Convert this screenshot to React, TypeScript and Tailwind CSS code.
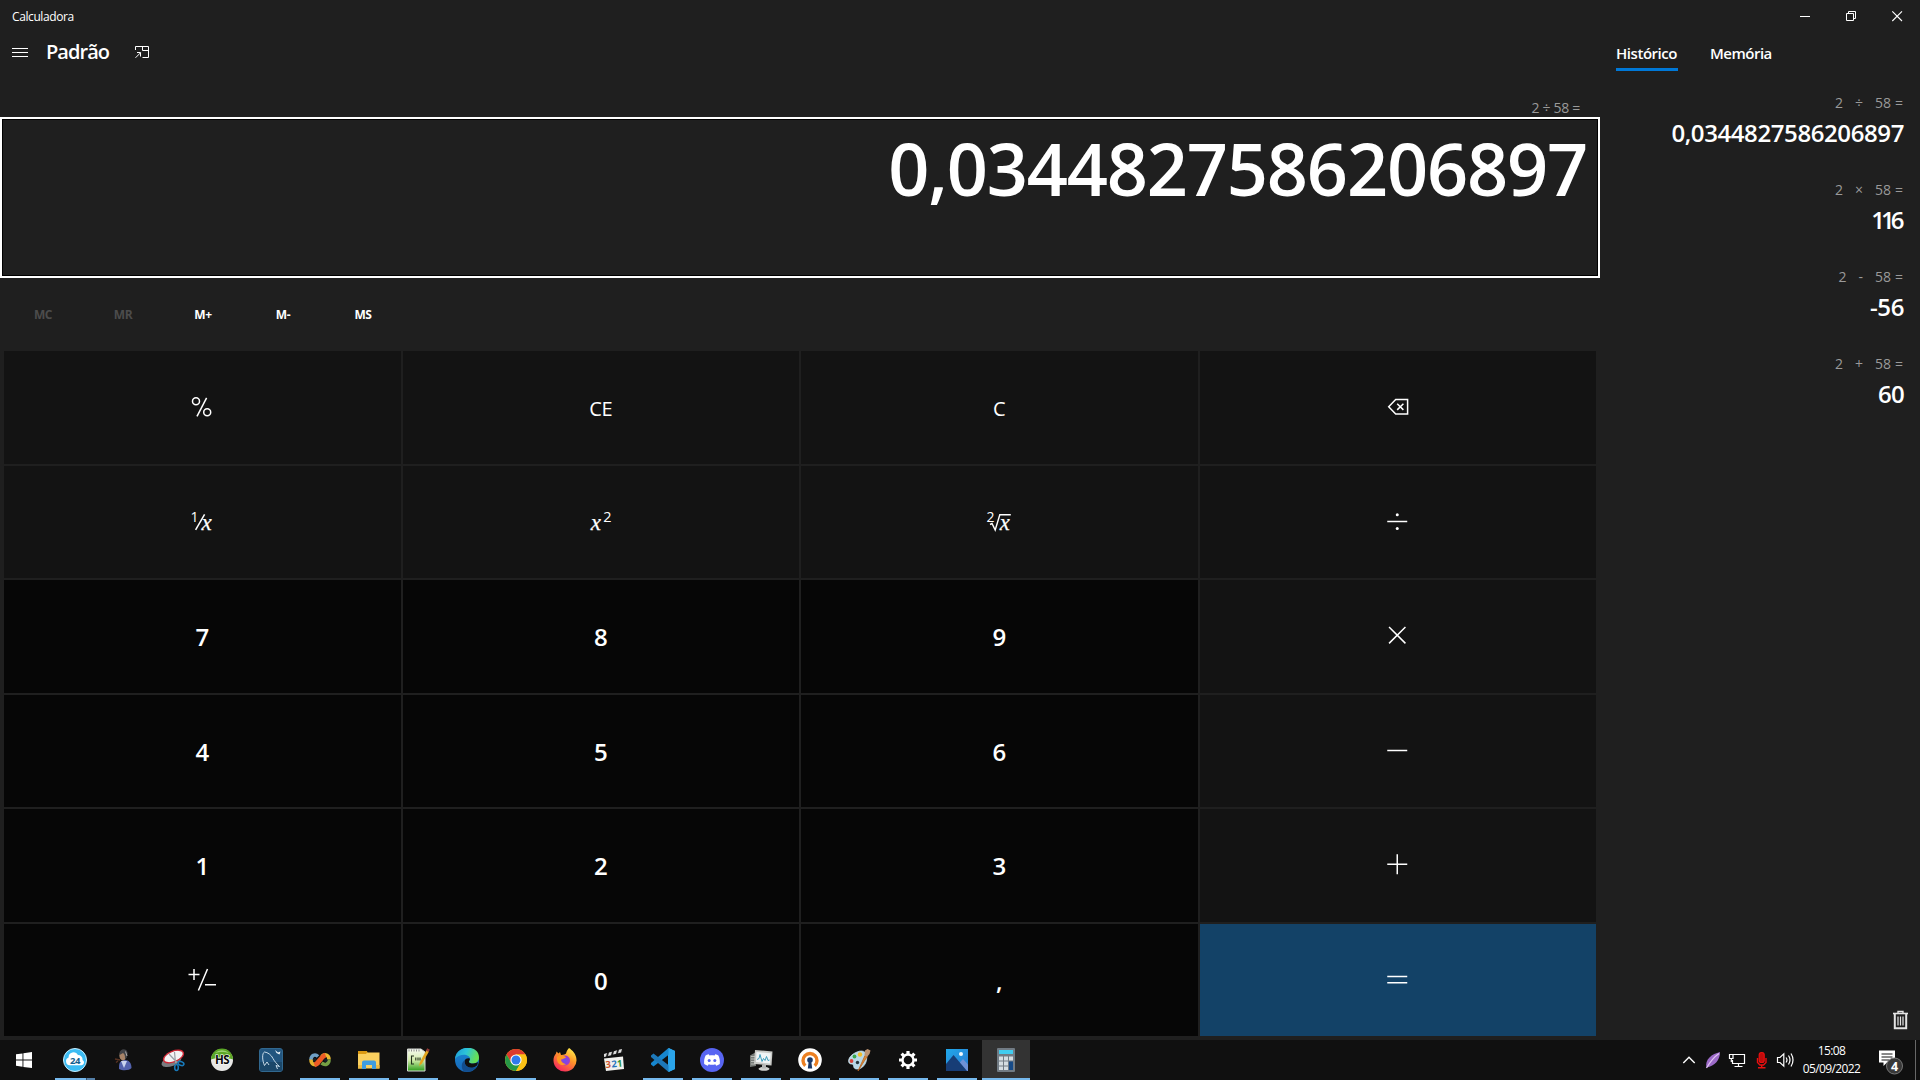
import type { ReactNode } from "react";

/* ---------- keypad glyphs ---------- */

function Glyph({ children, w = 32 }: { children: ReactNode; w?: number }) {
  return (
    <svg width={w} height="32" viewBox={`0 0 ${w} 32`} fill="none" stroke="#fff" strokeWidth="1.5">
      {children}
    </svg>
  );
}

const Percent = () => (
  <Glyph>
    <circle cx="10" cy="10.3" r="3.5" />
    <circle cx="21.2" cy="21.3" r="3.5" />
    <path d="M20.6 6.8 11 25.4" />
  </Glyph>
);

const Reciprocal = () => (
  <Glyph>
    <text x="4.5" y="16.2" fontSize="14" fill="#fff" stroke="none" fontFamily="Open Sans, sans-serif">1</text>
    <path d="M18.6 8.3 9.6 23.8" />
    <text x="15.6" y="23.5" fontSize="23" fill="#fff" stroke="#fff" strokeWidth=".25" fontStyle="italic" fontFamily="Liberation Serif, serif">x</text>
  </Glyph>
);

const Square = () => (
  <Glyph>
    <text x="5.8" y="23.700" fontSize="23" fill="#fff" stroke="#fff" strokeWidth=".25" fontStyle="italic" fontFamily="Liberation Serif, serif">x</text>
    <text x="18.3" y="16" fontSize="14.5" fill="#fff" stroke="none" fontFamily="Open Sans, sans-serif">2</text>
  </Glyph>
);

const Root = () => (
  <Glyph>
    <text x="3.600" y="16" fontSize="14" fill="#fff" stroke="none" fontFamily="Open Sans, sans-serif">2</text>
    <path d="M7 18.500 9 17.500 12.200 24 16.800 8.800H27.800" strokeWidth="1.400" />
    <text x="16.800" y="23.500" fontSize="22.500" fill="#fff" stroke="#fff" strokeWidth=".25" fontStyle="italic" fontFamily="Liberation Serif, serif">x</text>
  </Glyph>
);

const Backspace = () => (
  <Glyph>
    <path d="M6.700 15.800 13.700 8.600H25.600V23.100H13.700Z" strokeWidth="1.500" />
    <path d="M15.200 12.700 21.400 18.900M21.400 12.700 15.200 18.900" strokeWidth="1.500" />
  </Glyph>
);

const Divide = () => (
  <Glyph>
    <path d="M5.250 15.500H25.250" />
    <circle cx="15.250" cy="8.700" r="1.500" fill="#fff" stroke="none" />
    <circle cx="15.250" cy="22.400" r="1.500" fill="#fff" stroke="none" />
  </Glyph>
);

const Multiply = () => (
  <Glyph>
    <path d="M7.050 7 23.450 23.400M23.450 7 7.050 23.400" />
  </Glyph>
);

const Minus = () => (
  <Glyph>
    <path d="M5.250 15.500H25.250" />
  </Glyph>
);

const Plus = () => (
  <Glyph>
    <path d="M5.250 15.250H25.250M15.250 5.250V25.250" />
  </Glyph>
);

const Equals = () => (
  <Glyph>
    <path d="M5.250 12.500H25.250M5.250 18.700H25.250" />
  </Glyph>
);

const PlusMinus = () => (
  <Glyph>
    <path d="M2.500 10.500H13.500M8 5V16M21.500 5 12.400 26.500M19 20.700H30" />
  </Glyph>
);

/* ---------- keypad ---------- */

type Key = { id: string; content: ReactNode; tone: "op" | "num" | "eq" };

const digit = (d: string): Key => ({
  id: d,
  tone: "num",
  content: <span className="translate-y-px text-2xl font-semibold">{d}</span>,
});

const KEYS: Key[] = [
  { id: "percent", tone: "op", content: <Percent /> },
  { id: "CE", tone: "op", content: <span className="translate-y-0.5 text-[20px] tracking-[-0.3px]">CE</span> },
  { id: "C", tone: "op", content: <span className="translate-y-0.5 text-[20px]">C</span> },
  { id: "back", tone: "op", content: <Backspace /> },
  { id: "inv", tone: "op", content: <Reciprocal /> },
  { id: "sq", tone: "op", content: <Square /> },
  { id: "root", tone: "op", content: <Root /> },
  { id: "div", tone: "op", content: <Divide /> },
  digit("7"),
  digit("8"),
  digit("9"),
  { id: "mul", tone: "op", content: <Multiply /> },
  digit("4"),
  digit("5"),
  digit("6"),
  { id: "sub", tone: "op", content: <Minus /> },
  digit("1"),
  digit("2"),
  digit("3"),
  { id: "add", tone: "op", content: <Plus /> },
  { id: "neg", tone: "num", content: <PlusMinus /> },
  digit("0"),
  digit(","),
  { id: "eq", tone: "eq", content: <Equals /> },
];

const TONES = { op: "bg-[#131313]", num: "bg-[#060606]", eq: "bg-[#134267]" };

function Keypad() {
  return (
    <div className="grid h-[685px] grid-cols-4 grid-rows-6 gap-0.5 px-1">
      {KEYS.map((k) => (
        <button key={k.id} className={`flex items-center justify-center ${TONES[k.tone]}`}>
          {k.content}
        </button>
      ))}
    </div>
  );
}

/* ---------- history ---------- */

const HISTORY = [
  { op: "÷", result: "0,0344827586206897", spacing: "tracking-[-0.4px]" },
  { op: "×", result: "116", spacing: "mr-[3.6px] tracking-[-4px]" },
  { op: "-", result: "-56", spacing: "tracking-[-0.4px]" },
  { op: "+", result: "60", spacing: "tracking-[-0.7px]" },
];

function History() {
  return (
    <aside className="flex w-80 flex-col">
      <div className="flex h-[58px] gap-8 pl-4 text-[15px] font-semibold leading-5">
        <div className="flex h-[38px] w-[62px] flex-col justify-between">
          <span className="pt-[10px] tracking-[-0.45px]">Histórico</span>
          <span className="h-[3px] bg-[#0078d7]" />
        </div>
        <span className="pt-[10px] tracking-[-0.5px]">Memória</span>
      </div>
      <ul className="flex flex-1 flex-col pr-4 text-right">
        {HISTORY.map((h) => (
          <li key={h.op} className="flex h-[87px] flex-col pt-0.5">
            <div className="flex justify-end pr-px text-sm leading-5 text-[#9a9a9a]">
              <span>2</span>
              <span className="px-3">{h.op}</span>
              <span className="tracking-[0.1px]">58 =</span>
            </div>
            <span className={`pt-1 text-2xl font-semibold leading-8 ${h.spacing}`}>{h.result}</span>
          </li>
        ))}
      </ul>
      <div className="flex h-[39px] justify-end pr-3 pt-[9px]">
        <svg width="15" height="20" viewBox="0 0 15 20" fill="none" stroke="#e4e4e4">
          <path d="M0 3.5H15" strokeWidth="1.6" />
          <path d="M5 3V1.5H10V3" strokeWidth="1.4" />
          <path d="M1.8 4V18.2H13.2V4" strokeWidth="2" />
          <path d="M5 6.5V15.5M7.5 6.5V15.5M10 6.5V15.5" strokeWidth="1.2" />
        </svg>
      </div>
    </aside>
  );
}

/* ---------- taskbar icons ---------- */

function Ico({ children }: { children: ReactNode }) {
  return (
    <svg width="24" height="24" viewBox="0 0 24 24">
      {children}
    </svg>
  );
}

const Bitrix = () => (
  <Ico>
    <circle cx="12" cy="12" r="11.5" fill="#3cbcf3" stroke="#c9efff" />
    <path d="M6.500 17.300a4 4 0 0 1-.9-7.700A5 5 0 0 1 15 7a4.600 4.600 0 0 1 4.600 4.900 2.900 2.900 0 0 1-1.100 5.400Z" fill="#fff" />
    <text x="12" y="15.600" fontSize="9.500" fontWeight="700" textAnchor="middle" fill="#12608f" letterSpacing="-.4" fontFamily="Open Sans, sans-serif">24</text>
  </Ico>
);

const Agent = () => (
  <Ico>
    <path d="M7 19c0-5 2-7 6-7s6.500 3 6.500 8c-2 2.600-9 3-12.500 1Z" fill="#5362ad" />
    <path d="M9 13 12 20 15 13Z" fill="#c9d3ee" />
    <ellipse cx="11" cy="7.500" rx="3.600" ry="5" fill="#a88468" />
    <path d="M7.600 7C6 1 14.500-1 15.500 4.500c.5 3-1 6-2.500 7 0-3 .2-5-2-6.500Z" fill="#424347" />
    <path d="M13.500 3.500 15 8" stroke="#aaa" />
    <path d="M3 11 8 12M4 14.500l2-1.500" stroke="#593322" strokeWidth="1.500" />
  </Ico>
);

const Snip = () => (
  <Ico>
    <ellipse cx="10.500" cy="13" rx="10.500" ry="5" transform="rotate(-22 10.500 13)" fill="#797c80" />
    <ellipse cx="12.500" cy="8.500" rx="10.500" ry="5.300" transform="rotate(-22 12.500 8.500)" fill="#f3f3f4" stroke="#cf2634" strokeWidth="1.300" />
    <path d="m8 6 8 8.500M13.500 4l1 11" stroke="#9a9fa6" strokeWidth="1.200" />
    <g fill="none" stroke="#1878b8" strokeWidth="1.600">
      <ellipse cx="15.500" cy="19.500" rx="1.800" ry="3" />
      <ellipse cx="20" cy="15.500" rx="3" ry="1.900" transform="rotate(20 20 15.500)" />
    </g>
  </Ico>
);

const HeidiSql = () => (
  <Ico>
    <circle cx="12" cy="12" r="11" fill="#e8e8e6" />
    <path d="M1 11.500a11 11 0 0 1 22 0C17 9 7 9 1 11.500Z" fill="#5ba726" />
    <path d="M5 5a10 10 0 0 1 14 0c-4-1.500-10-1.500-14 0Z" fill="#9bd071" />
    <text x="12" y="16" fontSize="11.500" fontWeight="700" textAnchor="middle" fill="#080808" stroke="#fff" strokeWidth="1.200" paintOrder="stroke" fontFamily="Open Sans, sans-serif" letterSpacing="-.6">HS</text>
  </Ico>
);

const Workbench = () => (
  <Ico>
    <rect x=".5" y=".5" width="23" height="23" rx="2.500" fill="#22557f" stroke="#31688f" />
    <path d="M1 14h22v7.500a1.500 1.500 0 0 1-1.500 1.500h-19A1.500 1.500 0 0 1 1 21.500Z" fill="#1b4769" />
    <path d="M5.500 17.500C3 12 3 5 5.500 4c3 .2 7 3 8.500 6.500 1.500 3 4 5.500 6.500 8L17 17.500 18.500 21M5.500 17.500 8 14l2 3" fill="none" stroke="#c8dbe9" strokeWidth="1" />
    <path d="m16 2 3 2.500 2.500-1-1 3-3-1.500Z" fill="#edf5fa" />
  </Ico>
);

const Infinity8 = () => (
  <Ico>
    <g fill="none" strokeWidth="3.600">
      <path d="M10 8.500C7 5.500 3 7.500 3 12" stroke="#6f9fc5" />
      <path d="M3 11.500c0 5 4 6.500 7.500 3.500" stroke="#e2b32f" />
      <path d="M13.500 8.500c3.500-3 7.500-1.500 7.500 3" stroke="#eab931" />
      <path d="M21 11.500c0 4.500-3.500 6.500-7.500 3.500" stroke="#75a044" />
      <path d="M6.500 17C11 15.500 13 8.500 17.500 7" stroke="#ed5b25" strokeWidth="5" />
    </g>
    <circle cx="6.500" cy="11.800" r="1.800" fill="#17202a" />
    <circle cx="17.800" cy="12.200" r="1.800" fill="#17202a" />
  </Ico>
);

const Folder = () => (
  <Ico>
    <path d="M1 3h8.500l1 1.500H22.500V20.500H1Z" fill="#fbd05f" />
    <path d="M1 3h8.500l1 1-1.500 2H1Z" fill="#dc9a13" />
    <path d="M5 21v-6.500a2 2 0 0 1 2-2H17a2 2 0 0 1 2 2V21H15v-4H9v4Z" fill="#3f9de0" />
    <path d="M1 17h4v3.500H1ZM19 17h3.500v3.500H19Z" fill="#eebb45" />
  </Ico>
);

const Notepad = () => (
  <Ico>
    <defs>
      <linearGradient id="np" x1="0" y1="0" x2="0" y2="1">
        <stop offset="0" stopColor="#f8fbf1" />
        <stop offset=".5" stopColor="#d4edac" />
        <stop offset="1" stopColor="#2b9d19" />
      </linearGradient>
    </defs>
    <path d="M1.500 1H15l4 3v19H1.500Z" fill="url(#np)" stroke="#d7d9d5" />
    <path d="M3 1.500v2M5.500 1.500v2M8 1.500v2M10.500 1.500v2M13 1.500v2" stroke="#777" strokeWidth=".8" />
    <path d="M8 8H5.500v8H8M9.800 9.500v3M12 9.500v3M14 9.500v3" fill="none" stroke="#25331d" strokeWidth="1.100" />
    <path d="m13 18 1-4 6.500-12 2.500 1.500-7 12Z" fill="#e3a51d" />
    <path d="m20 2.500 1.200-2.300 2.600 1.500-1.300 2.300Z" fill="#943a36" />
  </Ico>
);

const Edge = () => (
  <Ico>
    <defs>
      <linearGradient id="eg" x1="0" y1="0" x2="1" y2=".3">
        <stop offset="0" stopColor="#1d98d5" />
        <stop offset=".5" stopColor="#2cc4da" />
        <stop offset="1" stopColor="#67df54" />
      </linearGradient>
      <linearGradient id="eb" x1="0" y1="0" x2="0" y2="1">
        <stop offset="0" stopColor="#1989d5" />
        <stop offset="1" stopColor="#1767b8" />
      </linearGradient>
    </defs>
    <circle cx="12" cy="12" r="12" fill="url(#eb)" />
    <path d="M0 11C1-3.500 24-4 24 9.500c0 5-4.500 6.500-8 6-2-.3-2.500-1.500-1.500-2.500C18 7 6 3.500 0 11Z" fill="url(#eg)" />
    <path d="M9.500 13.500C10 11 12 9.800 14.800 10.500c.3 1-.2 1.700-.6 2.300-1 1.600 1 3 4 2.700 2-.2 3.800-.9 4.800-1.500l-.6 3C18 22 9.500 20 9.500 13.500Z" fill="#101010" />
    <path d="M9.500 13.500c0 5 6 8 12 5-3 5-8.500 6-12.500 5C5.500 20 6 14 11 11c-1 .5-1.500 1.500-1.500 2.500Z" fill="#124d8d" />
  </Ico>
);

const Chrome = () => (
  <Ico>
    <circle cx="12" cy="12" r="11" fill="#fbc116" />
    <path d="M2.500 6.500A11 11 0 0 1 21.500 6.500H12L7.200 14.700Z" fill="#dc3a2e" />
    <path d="M2.500 6.500 7.200 14.700 16.800 14.700 12 23A11 11 0 0 1 2.500 6.500Z" fill="#269847" />
    <path d="M12 23 17.300 14 12 6.500H21.500A11 11 0 0 1 12 23Z" fill="#fbc116" />
    <circle cx="12" cy="12" r="5.600" fill="#fff" />
    <circle cx="12" cy="12" r="4.500" fill="#3079ed" />
  </Ico>
);

const Firefox = () => (
  <Ico>
    <defs>
      <linearGradient id="ff" x1=".8" y1="0" x2=".2" y2="1">
        <stop offset="0" stopColor="#fff04e" />
        <stop offset=".4" stopColor="#ff9828" />
        <stop offset="1" stopColor="#f51d62" />
      </linearGradient>
      <radialGradient id="fp">
        <stop offset="0" stopColor="#6950ed" />
        <stop offset="1" stopColor="#a537cd" />
      </radialGradient>
    </defs>
    <path d="M16 0c3 2 7.500 6 7.500 12a11.500 11 0 0 1-23 1c-.2-3 .8-5.500 2.500-7.500L3.500 3.500 5.500 5.500 7 4l1 3c2 .2 4.500-.8 5-1.500C13.500 3.500 14.500 1.500 16 0Z" fill="url(#ff)" />
    <circle cx="12" cy="12.500" r="5" fill="url(#fp)" />
    <path d="M4 9c3-3 8-1.500 9 1-2-.4-2.500 1.500-5 1.500 0 2 2 4.500 5.500 4.500-5 3-10.500-.5-9.500-7Z" fill="#ff9822" />
  </Ico>
);

const Clapper = () => (
  <Ico>
    <path d="M2 10.500 21 8.500 22 21 4 23Z" fill="#f1f1ee" />
    <path d="M1.500 6 20 .8 20.800 4.300 2.300 9.500Z" fill="#222" />
    <path d="m2 6 3-1-1 3.600-2 .5ZM7 4.600l3-.9-1 3.500-3 .8ZM12 3.200l3-.9-1 3.500-3 .8ZM17 1.800l3-.9-1 3.500-3 .8Z" fill="#dedede" />
    <g fontSize="9.500" fontWeight="700" fontFamily="Open Sans, sans-serif" transform="rotate(-5 12 19)">
      <text x="3.800" y="19.200" fill="#ce562b">3</text>
      <text x="9.700" y="19.200" fill="#2673bd">2</text>
      <text x="15.300" y="19.200" fill="#28913b">1</text>
    </g>
  </Ico>
);

const VsCode = () => (
  <Ico>
    <path d="M17.500 0 24 3v18l-6.500 3L17 17.500v-11Z" fill="#28a7ee" />
    <path d="M17.500 0 18 6.500 2.500 18.500 0 16.500v-1.500Z" fill="#1686ce" />
    <path d="M17.500 24 18 17.500 2.500 5.500 0 7.500v1.500Z" fill="#1d78b9" />
    <path d="M17.500 0 24 3v18l-6.500 3Z" fill="#2ba5eb" />
  </Ico>
);

const Discord = () => (
  <Ico>
    <circle cx="12" cy="12" r="12" fill="#5865f2" />
    <path d="M8.800 6.300c-1.500.3-2.500.7-3.200 1.200C4.300 10 3.900 13 4.200 16c1.200.9 2.400 1.400 3.600 1.700l.9-1.500c2 .7 4.600.7 6.600 0l.9 1.500c1.200-.3 2.400-.8 3.600-1.700.3-3-.1-6-1.400-8.500-.7-.5-1.700-.9-3.200-1.200l-.6 1.200c-1.700-.3-3.500-.3-5.200 0Z" fill="#fff" />
    <circle cx="9.200" cy="12.500" r="1.500" fill="#5865f2" />
    <circle cx="14.800" cy="12.500" r="1.500" fill="#5865f2" />
  </Ico>
);

const Monitor = () => (
  <Ico>
    <path d="M1 7.500 7 4v14l-6 1Z" fill="#777b78" />
    <path d="M2 8.500h4M2 11h4M2 13.500h4M2 16h4" stroke="#c8ccc7" strokeWidth=".8" />
    <path d="m6 2 17.500 1.500-1 14L5 16Z" fill="#c9cac7" />
    <path d="m7.500 4 14.300 1.200-.8 10.300L7 14Z" fill="#f0f4f6" />
    <path d="m8 11.500 2-1 1-4 2 7 1.500-3 1.500 2 1.500-4 1.500 4 1.500-.5" fill="none" stroke="#3e9dbb" />
    <ellipse cx="15" cy="20.800" rx="5.500" ry="2" fill="#cfd0ce" />
    <path d="M13 16.500h4v4h-4Z" fill="#b4b5b4" />
  </Ico>
);

const OpenVpn = () => (
  <Ico>
    <circle cx="12" cy="12" r="11.800" fill="#fff" />
    <path d="M7.300 17.700a7 7 0 1 1 9.400 0" fill="none" stroke="#ec8022" strokeWidth="3.400" />
    <circle cx="12" cy="12" r="2.800" fill="#1a3765" />
    <path d="M10.800 13h2.400l1 7.500H9.800Z" fill="#1a3765" />
  </Ico>
);

const Paint = () => (
  <Ico>
    <path d="M10 4c7-3 11 1 9.500 8-1 6-6 9.500-10 9C5 20.500 8 16 4.500 16 0 16 0 8 10 4Z" fill="#b8d8e7" stroke="#d5e8f0" strokeWidth=".7" />
    <circle cx="4.500" cy="13" r="1.900" fill="#d9463c" />
    <circle cx="7.500" cy="8.500" r="1.900" fill="#3ba84c" />
    <circle cx="13" cy="6.500" r="2.200" fill="#f3bd28" />
    <circle cx="10.500" cy="14.500" r="1.700" fill="#26343a" />
    <path d="M11 23 18 7.500l2.200 1Z" fill="#dd8f39" stroke="#b96322" strokeWidth=".8" />
    <path d="m17.500 7.500.5-5 2.500-1.500 3 1.500-1 3.500-2.300 2.800Z" fill="#be9472" />
  </Ico>
);

const Gear = () => (
  <Ico>
    <g stroke="#fff" strokeWidth="3.200">
      <path d="M12 3v3M12 18v3M3 12h3M18 12h3M5.600 5.600l2.200 2.200M16.200 16.200l2.200 2.200M5.600 18.400l2.200-2.200M16.200 7.800l2.200-2.200" />
    </g>
    <circle cx="12" cy="12" r="5.500" fill="none" stroke="#fff" strokeWidth="2.400" />
  </Ico>
);

const Photos = () => (
  <Ico>
    <defs>
      <linearGradient id="ph" x1="0" y1="0" x2="1" y2="1">
        <stop offset="0" stopColor="#20a8eb" />
        <stop offset="1" stopColor="#2b78cf" />
      </linearGradient>
    </defs>
    <path d="M1 1h22v22H1Z" fill="url(#ph)" />
    <path d="m13.500 16 4.500-5 5 5.500V23h-5Z" fill="#6e91d7" />
    <path d="M1 16 8.500 7 22 23H1Z" fill="#173d76" />
    <circle cx="16" cy="6" r="2" fill="#f2f9fe" />
  </Ico>
);

const Calc = () => (
  <Ico>
    <rect x="3" y="0" width="18" height="24" rx="1" fill="#717b84" />
    <path d="M5 2h14v4H5Z" fill="#41ccef" />
    <path d="M5 8.500h4v4H5ZM10 8.500h4v4h-4ZM15 8.500h4v4h-4ZM5 13.500h4v4H5ZM10 13.500h4v4h-4ZM5 18.500h4v3.500H5ZM10 18.500h4v3.500h-4Z" fill="#d5dde2" />
    <path d="M15 13.500h4V22h-4Z" fill="#174b88" />
  </Ico>
);

type App = { id: string; icon: ReactNode; open?: boolean; active?: boolean; grouped?: boolean };

const APPS: App[] = [
  { id: "bitrix", icon: <Bitrix />, open: true, grouped: true },
  { id: "agent", icon: <Agent /> },
  { id: "snip", icon: <Snip /> },
  { id: "heidi", icon: <HeidiSql /> },
  { id: "workbench", icon: <Workbench /> },
  { id: "infinity", icon: <Infinity8 />, open: true },
  { id: "folder", icon: <Folder />, open: true },
  { id: "notepad", icon: <Notepad />, open: true },
  { id: "edge", icon: <Edge /> },
  { id: "chrome", icon: <Chrome />, open: true },
  { id: "firefox", icon: <Firefox /> },
  { id: "clapper", icon: <Clapper /> },
  { id: "vscode", icon: <VsCode />, open: true },
  { id: "discord", icon: <Discord />, open: true },
  { id: "monitor", icon: <Monitor />, open: true },
  { id: "openvpn", icon: <OpenVpn />, open: true },
  { id: "paint", icon: <Paint />, open: true },
  { id: "gear", icon: <Gear />, open: true },
  { id: "photos", icon: <Photos />, open: true },
  { id: "calc", icon: <Calc />, open: true, active: true },
];

function TaskButton({ app }: { app: App }) {
  return (
    <div className={`flex h-10 w-12 flex-col items-center ${app.active ? "bg-[#333333]" : ""}`}>
      <div className="flex h-[38px] items-center pt-[2px]">{app.icon}</div>
      {app.open && (
        <div className={`flex h-0.5 bg-[#76b9ed] ${app.active ? "w-12" : "w-10"}`}>
          {app.grouped && <div className="ml-[31px] h-0.5 w-[9px] border-l border-[#33516b] bg-[#547fa8]" />}
        </div>
      )}
    </div>
  );
}

function Tray() {
  return (
    <div className="flex h-10 items-center">
      <svg width="120" height="24" viewBox="1677 1048 120 24" fill="none" stroke="#fff" strokeWidth="1.200">
        <path d="M1683.300 1063 1689 1057.300 1694.700 1063" strokeWidth="1.400" />
        <path d="M1706.500 1068C1704.500 1059 1712 1054 1720 1052 1720 1060 1715 1066 1706.500 1067.500Z" fill="#9c6ac8" stroke="none" />
        <path d="M1706.500 1068C1710 1062 1714 1057 1719 1053.500" stroke="#e1c5f3" />
        <path d="M1733 1054.500H1744.500V1063.500H1732.500V1060M1738.500 1063.500V1066.500M1734.500 1066.500H1742.500" />
        <path d="M1729.500 1054.500H1733V1058.500H1729.500ZM1731.300 1058.500V1062" />
        <g stroke="#e81010">
          <rect x="1759.200" y="1052.500" width="5" height="10" rx="2.300" fill="#c00b0b" />
          <path d="M1757.500 1058V1062.500L1760 1065H1763.500L1766 1062.500V1058M1761.700 1065V1067.700M1758 1067.700H1765.500" strokeWidth="1.400" />
        </g>
        <path d="M1777.500 1057.500H1780L1783.800 1053.800V1066.200L1780 1062.500H1777.500ZM1786 1057.500Q1788 1060 1786 1062.500M1788.500 1055.500Q1791.500 1060 1788.500 1064.500M1791 1053.500Q1795 1060 1791 1066.500" />
      </svg>
      <div className="flex w-[69px] flex-col text-center text-xs leading-[18px] tracking-[-0.6px]">
        <span>15:08</span>
        <span>05/09/2022</span>
      </div>
      <svg className="ml-[11px]" width="30" height="30" viewBox="1877 1046.500 30 30">
        <path d="M1879 1052H1895V1064H1887L1883.500 1067.500V1064H1879Z" fill="#fff" />
        <path d="M1881.500 1055.500H1892.500M1881.500 1058.500H1892.500M1881.500 1061.500H1889" stroke="#101010" />
        <circle cx="1894.500" cy="1067.500" r="8" fill="#383838" stroke="#777" />
        <text x="1894.500" y="1072" fontSize="12.500" fontWeight="700" textAnchor="middle" fill="#fff" fontFamily="Open Sans, sans-serif">4</text>
      </svg>
      <div className="ml-2 mr-1 h-10 w-px bg-[#686868]" />
    </div>
  );
}

function Taskbar() {
  return (
    <footer className="flex h-10 justify-between bg-[#101010]">
      <div className="flex gap-px">
        <div className="flex w-[50px] items-center pl-4">
          <svg width="16" height="16" viewBox="0 0 16 16" fill="#fff">
            <path d="M0 2.300 6.500 1.400V7.600H0ZM7.400 1.200 16 0V7.600H7.400ZM0 8.500H6.500V14.700L0 13.800ZM7.400 8.500H16V16L7.400 14.900Z" />
          </svg>
        </div>
        {APPS.map((a) => (
          <TaskButton key={a.id} app={a} />
        ))}
      </div>
      <Tray />
    </footer>
  );
}

/* ---------- header and display ---------- */

function TitleBar() {
  return (
    <div className="flex h-[33px] items-start justify-between pl-3">
      <span className="pt-[9px] text-xs leading-4 tracking-[-0.4px]">Calculadora</span>
      <svg className="mt-2.5 mr-4" width="104" height="12" viewBox="0 0 104 12" fill="none" stroke="#fff">
        <path d="M0 6.500H10" />
        <path d="M46.500 3.500H53.500V10.500H46.500ZM48.500 3V1.500H55.500V8.500H54" />
        <path d="M92.300 1.300 102 11M102 1.300 92.300 11" strokeWidth="1.100" />
      </svg>
    </div>
  );
}

function Header() {
  return (
    <div className="flex h-[38px] items-center pl-3">
      <svg width="16" height="9" viewBox="0 0 16 9" stroke="#fff">
        <path d="M0 .5H16M0 4.500H16M0 8.500H16" />
      </svg>
      <span className="ml-[18px] w-[89px] text-xl font-semibold leading-7 tracking-[-0.95px]">Padrão</span>
      <svg width="14" height="13" viewBox="0 0 14 13" fill="none" stroke="#fff">
        <path d="M.5 4V.5H13.500V11.500H7.500M7.500 .5V4.500H13.500M.5 11.800 5.500 6.800M2 6.500H5.500V10.500" />
      </svg>
    </div>
  );
}

const MEMORY = [
  { label: "MC", on: false },
  { label: "MR", on: false },
  { label: "M+", on: true },
  { label: "M-", on: true },
  { label: "MS", on: true },
];

export default function App() {
  return (
    <div className="flex h-[1080px] w-[1920px] flex-col overflow-hidden bg-[#1f1f1f] font-['Open_Sans',sans-serif] text-white">
      <TitleBar />
      <div className="flex h-[1007px]">
        <main className="flex w-[1600px] flex-col">
          <Header />
          <div className="flex h-[46px] items-end justify-end pr-5 text-sm leading-[18px] tracking-[-0.3px] text-[#9a9a9a]">
            2 ÷ 58 =
          </div>
          <div className="h-[161px] border-2 border-white">
            <div className="h-full border border-black pr-[10px] text-right text-[72px] font-semibold leading-[97px] tracking-[-1.15px]">
              0,0344827586206897
            </div>
          </div>
          <div className="flex h-[73px] items-center pl-[3px] text-xs font-bold tracking-[-0.4px]">
            {MEMORY.map((m) => (
              <span key={m.label} className={`w-20 text-center ${m.on ? "text-white" : "text-[#4c4c4c]"}`}>
                {m.label}
              </span>
            ))}
          </div>
          <Keypad />
        </main>
        <History />
      </div>
      <Taskbar />
    </div>
  );
}
